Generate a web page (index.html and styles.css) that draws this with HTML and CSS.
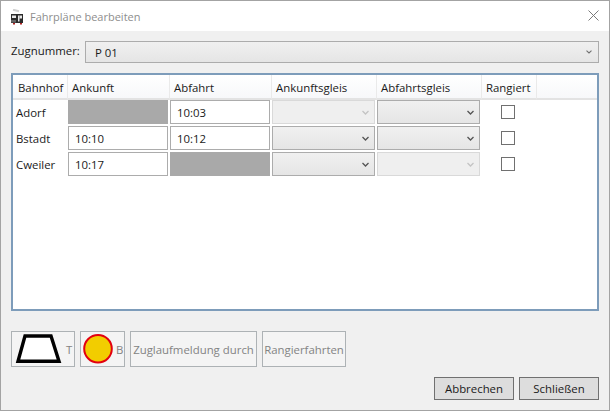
FILE: index.html
```html
<!DOCTYPE html>
<html lang="de">
<head>
<meta charset="utf-8">
<title>Fahrpläne bearbeiten</title>
<link rel="stylesheet" href="styles.css">
</head>
<body>
<div class="window">
  <header class="titlebar">
    <svg class="appicon" width="13" height="16" viewBox="0 0 13 16">
      <path d="M2 .7 L8 2.200" stroke="#cfcfcf" stroke-width="2" fill="none"/>
      <rect x="0" y="5" width="12" height="9" fill="#2b2b2b"/>
      <rect x="1" y="6.500" width="4" height="2.500" fill="#e8e8e8"/>
      <rect x="7" y="6.500" width="1.500" height="6" fill="#e8e8e8"/>
      <rect x="8.500" y="6.500" width="2.500" height="3" fill="#e8e8e8"/>
      <rect x="0" y="11" width="5" height="2.500" fill="#666"/>
      <rect x="2" y="14" width="2" height="1.500" fill="#b02020"/>
      <rect x="9" y="14" width="2" height="1.500" fill="#b02020"/>
    </svg>
    <span class="title">Fahrpläne bearbeiten</span>
    <svg class="close" width="11" height="11" viewBox="0 0 11 11"><path d="M.5 .5 L10.500 10.500 M10.500 .5 L.5 10.500" stroke="#7a7a7a" stroke-width="1" fill="none"/></svg>
  </header>
  <main class="content">
    <div class="trainrow">
      <span class="trainlabel">Zugnummer:</span>
      <div class="combo main-combo"><span>P 01</span><svg class="chev" width="6" height="4" viewBox="0 0 6 4"><path d="M.5 .7 L3 3 L5.500 .7" stroke="#707070" stroke-width="1.100" fill="none"/></svg></div>
    </div>
    <section class="grid-box">
      <div class="grid">
        <div class="h h1">Bahnhof</div><div class="h">Ankunft</div><div class="h">Abfahrt</div><div class="h">Ankunftsgleis</div><div class="h">Abfahrtsgleis</div><div class="h">Rangiert</div><div class="h hlast"></div>

        <div class="station">Adorf</div>
        <div class="blocked"></div>
        <div class="input">10:03</div>
        <div class="combo cell off"><svg class="chev" width="7" height="5" viewBox="0 0 7 5"><path d="M.5 1 L3.500 4 L6.500 1" stroke="#c4c4c4" stroke-width="1.300" fill="none"/></svg></div>
        <div class="combo cell"><svg class="chev" width="7" height="5" viewBox="0 0 7 5"><path d="M.5 1 L3.500 4 L6.500 1" stroke="#555" stroke-width="1.300" fill="none"/></svg></div>
        <div class="checkcell"><span class="check"></span></div><div></div>

        <div class="station">Bstadt</div>
        <div class="input">10:10</div>
        <div class="input">10:12</div>
        <div class="combo cell"><svg class="chev" width="7" height="5" viewBox="0 0 7 5"><path d="M.5 1 L3.500 4 L6.500 1" stroke="#555" stroke-width="1.300" fill="none"/></svg></div>
        <div class="combo cell"><svg class="chev" width="7" height="5" viewBox="0 0 7 5"><path d="M.5 1 L3.500 4 L6.500 1" stroke="#555" stroke-width="1.300" fill="none"/></svg></div>
        <div class="checkcell"><span class="check"></span></div><div></div>

        <div class="station">Cweiler</div>
        <div class="input">10:17</div>
        <div class="blocked"></div>
        <div class="combo cell"><svg class="chev" width="7" height="5" viewBox="0 0 7 5"><path d="M.5 1 L3.500 4 L6.500 1" stroke="#555" stroke-width="1.300" fill="none"/></svg></div>
        <div class="combo cell off"><svg class="chev" width="7" height="5" viewBox="0 0 7 5"><path d="M.5 1 L3.500 4 L6.500 1" stroke="#c4c4c4" stroke-width="1.300" fill="none"/></svg></div>
        <div class="checkcell"><span class="check"></span></div><div></div>
      </div>
    </section>
    <div class="tools">
      <button class="tool tool-t" type="button">
        <svg width="50" height="30" viewBox="0 0 50 30"><path d="M12 2 L38 2 L46 27.200 L5 27.200 Z" fill="#fff" stroke="#000" stroke-width="3.400"/></svg>
        <span>T</span>
      </button>
      <button class="tool tool-b" type="button">
        <svg width="32" height="32" viewBox="0 0 32 32"><circle cx="16" cy="15.700" r="13.800" fill="#f2cd00" stroke="#e3000f" stroke-width="2"/></svg>
        <span>B</span>
      </button>
      <button class="tool tool-z" type="button">Zuglaufmeldung durch</button>
      <button class="tool tool-r" type="button">Rangierfahrten</button>
    </div>
    <footer class="actions">
      <button class="action" type="button">Abbrechen</button>
      <button class="action" type="button">Schließen</button>
    </footer>
  </main>
</div>
</body>
</html>
```
FILE: styles.css
```css
* { box-sizing: border-box; }
html, body { margin: 0; padding: 0; }
body {
  width: 610px;
  height: 411px;
  overflow: hidden;
  font-family: "Open Sans", "Noto Sans", sans-serif;
  font-size: 11.4px;
  color: #1a1a1a;
}
.window {
  width: 610px;
  height: 411px;
  border: 1px solid #a3a3a3;
  display: flex;
  flex-direction: column;
  background: #f0f0f0;
}
.titlebar {
  height: 30px;
  background: #fff;
  display: flex;
  align-items: center;
  padding: 0 10px;
  flex: none;
}
.appicon { flex: none; margin-left: 0; margin-right: 6px; margin-top: 1px; }
.title { color: #8e8e8e; flex: 1; font-size: 11px; }
.close { flex: none; margin-bottom: 1px; }
.content {
  flex: 1;
  padding: 10px;
  display: flex;
  flex-direction: column;
}
.trainrow { display: flex; align-items: center; height: 22px; }
.trainlabel { width: 74px; flex: none; padding-bottom: 4px; }
.combo {
  display: flex;
  align-items: center;
  justify-content: space-between;
  border: 1px solid #acacac;
  background: linear-gradient(#f0f0f0, #e5e5e5);
}
.main-combo { flex: 1; height: 22px; padding: 0 6px 0 9px; }
.chev { flex: none; }
.grid-box {
  margin-top: 10px;
  height: 238px;
  border: 2px solid #7d9cba;
  background: #fff;
}
.grid {
  display: grid;
  grid-template-columns: 55px 102px 102px 105px 105px 55px 1fr;
  grid-template-rows: 25px 26px 26px 26px;
}
.h {
  display: flex;
  align-items: center;
  padding-left: 4px;
  padding-top: 1px;
  border-right: 1px solid #eaeaea;
  border-bottom: 2px solid #e3e3e3;
  background: linear-gradient(#fff, #f7f8fa);
}
.h1 { padding-left: 5px; }
.hlast { border-right: 0; }
.station { display: flex; align-items: center; padding-left: 3px; height: 24px; }
.input {
  height: 24px;
  width: 100px;
  border: 1px solid #acacac;
  background: #fff;
  display: flex;
  align-items: center;
  padding-left: 6px;
}
.blocked { height: 24px; width: 100px; background: #a9a9a9; }
.cell { height: 24px; width: 103px; justify-content: flex-end; padding-right: 5px; }
.off { border-color: #d9d9d9; background: #efefef; }
.checkcell { display: flex; padding-top: 5px; padding-left: 19px; }
.check {
  display: block;
  width: 14px;
  height: 14px;
  border: 1px solid #707070;
  background: #fff;
}
.tools {
  display: flex;
  gap: 5px;
  margin-top: 20px;
  height: 36px;
}
button { font: inherit; margin: 0; }
.tool {
  height: 36px;
  border: 1px solid #adb2b5;
  background: #f4f4f4;
  color: #838383;
  padding: 0;
  display: flex;
  align-items: center;
  justify-content: center;
}
.tool-t { width: 64px; justify-content: flex-start; padding-left: 1px; gap: 3px; }
.tool-b { width: 45px; justify-content: flex-start; padding-left: 1px; gap: 2px; }
.tool-z { width: 127px; }
.tool-r { width: 84px; }
.actions {
  display: flex;
  justify-content: flex-end;
  gap: 5px;
  margin-top: 10px;
}
.action {
  width: 80px;
  height: 23px;
  border: 1px solid #707070;
  background: #dddddd;
  color: #1a1a1a;
  padding: 0;
}
```
